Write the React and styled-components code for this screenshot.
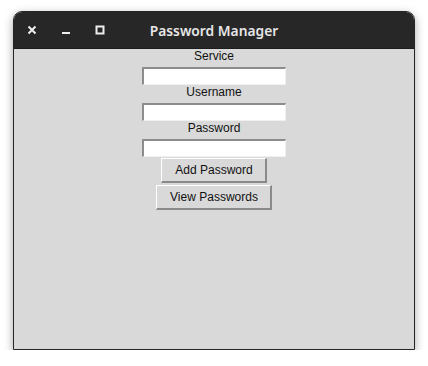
import React from "react";
import styled, { createGlobalStyle } from "styled-components";

const Global = createGlobalStyle`
  html, body { margin: 0; padding: 0; background: #ffffff; }
  #root { padding: 11px 13px 0 13px; }
`;

const Window = styled.div`
  width: 402px;
  box-sizing: border-box;
  border: 1px solid #262626;
  border-radius: 9px 9px 0 0;
  overflow: hidden;
  box-shadow: 0 3px 10px rgba(0, 0, 0, 0.35);
  display: flex;
  flex-direction: column;
`;

const TitleBar = styled.div`
  height: 36px;
  background: #272727;
  display: grid;
  grid-template-columns: 1fr auto 1fr;
  align-items: center;
  border-bottom: 1px solid #1c1c1c;
`;

const Controls = styled.div`
  display: flex;
  align-items: center;
  padding-left: 1px;
`;

const Ctl = styled.span`
  width: 34px;
  height: 20px;
  display: flex;
  align-items: center;
  justify-content: center;
`;

const Title = styled.div`
  font-family: "Noto Sans", sans-serif;
  font-weight: 600;
  font-size: 13.8px;
  color: #e6e6e6;
`;

const Content = styled.div`
  height: 300px;
  background: #d9d9d9;
  display: flex;
  flex-direction: column;
  align-items: center;
`;

const Label = styled.div`
  height: 18px;
  line-height: 15px;
  font-family: "Liberation Sans", Arial, sans-serif;
  font-size: 12px;
  color: #111;
`;

const Entry = styled.input`
  box-sizing: border-box;
  width: 144px;
  height: 18px;
  margin: 0;
  padding: 0 2px;
  background: #ffffff;
  border-style: solid;
  border-width: 2px 1px 1px 2px;
  border-color: #8c8c8c #f0f0f0 #f0f0f0 #8c8c8c;
  outline: none;
  font-family: "Liberation Sans", Arial, sans-serif;
  font-size: 12px;
`;

const Button = styled.button`
  box-sizing: border-box;
  height: 25px;
  margin-top: ${(p) => p.$top}px;
  padding: 0 12px 0 13px;
  background: #d9d9d9;
  border-style: solid;
  border-width: 1px 2px 2px 1px;
  border-color: #ffffff #8a8a8a #8a8a8a #ffffff;
  font-family: "Liberation Sans", Arial, sans-serif;
  font-size: 12px;
  color: #111;
`;

export default function App() {
  return (
    <>
      <Global />
      <Window>
        <TitleBar>
          <Controls>
            <Ctl>
              <svg width="10" height="10" viewBox="0 0 10 10">
                <path d="M1.5 1.5 L8.5 8.5 M8.5 1.5 L1.5 8.5" stroke="#eeeeee" strokeWidth="2" />
              </svg>
            </Ctl>
            <Ctl>
              <svg width="10" height="10" viewBox="0 0 10 10">
                <rect x="1" y="7" width="8" height="2" fill="#eeeeee" />
              </svg>
            </Ctl>
            <Ctl>
              <svg width="10" height="10" viewBox="0 0 10 10">
                <rect x="1.5" y="1.5" width="7" height="7" fill="none" stroke="#eeeeee" strokeWidth="2" />
              </svg>
            </Ctl>
          </Controls>
          <Title>Password Manager</Title>
          <div />
        </TitleBar>
        <Content>
          <Label>Service</Label>
          <Entry />
          <Label>Username</Label>
          <Entry />
          <Label>Password</Label>
          <Entry />
          <Button $top={1}>Add Password</Button>
          <Button $top={2}>View Passwords</Button>
        </Content>
      </Window>
    </>
  );
}
